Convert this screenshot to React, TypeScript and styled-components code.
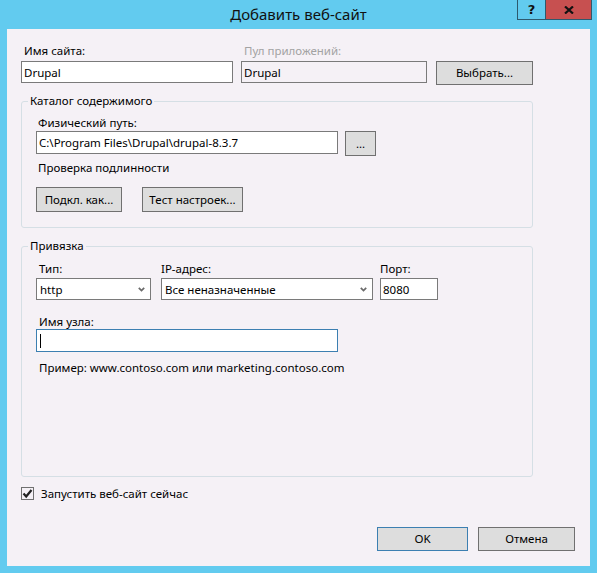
import React from "react";
import styled, { createGlobalStyle } from "styled-components";

const Global = createGlobalStyle`
  html, body { margin: 0; padding: 0; }
  body { font-family: "Noto Sans", "Open Sans", sans-serif; font-size: 11.5px; color: #000; }
  * { box-sizing: border-box; }
`;

const Window = styled.div`
  width: 597px;
  height: 573px;
  background: #62cbef;
  display: flex;
  flex-direction: column;
`;

const TitleBar = styled.div`
  height: 29px;
  flex: none;
  display: grid;
  grid-template-columns: 1fr auto 1fr;
  align-items: start;
`;

const Title = styled.div`
  grid-column: 2;
  font-size: 15px;
  line-height: 28px;
  color: #111;
`;

const Caption = styled.div`
  grid-column: 3;
  justify-self: end;
  display: flex;
  margin-right: 5px;
`;

const CapButton = styled.div<{ $w: number; $bg: string }>`
  width: ${(p) => p.$w}px;
  height: 20px;
  background: ${(p) => p.$bg};
  border: 1px solid #2d5a6e;
  border-top: none;
  display: flex;
  align-items: center;
  justify-content: center;
  font-weight: bold;
  font-size: 13px;
  font-family: "DejaVu Sans", sans-serif;
  color: #111;
  & + & { border-left: none; }
`;

const Client = styled.div`
  flex: 1;
  margin: 0 7px 7px;
  background: #f5f1f6;
  padding: 14px 15px 15px 14px;
  display: flex;
  flex-direction: column;
`;

const TopGrid = styled.div`
  display: grid;
  grid-template-columns: 212px 186px 98px;
  column-gap: 8px;
  row-gap: 3px;
  align-items: start;
`;

const Label = styled.div<{ $indent?: number; $disabled?: boolean; $mt?: number }>`
  line-height: 15px;
  height: 15px;
  white-space: nowrap;
  padding-left: ${(p) => p.$indent ?? 3}px;
  margin-top: ${(p) => p.$mt ?? 0}px;
  color: ${(p) => (p.$disabled ? "#a3a3a3" : "#000")};
`;

const TextBox = styled.input<{ $w?: number; $h?: number; $ro?: boolean }>`
  width: ${(p) => (p.$w ? `${p.$w}px` : "100%")};
  height: ${(p) => p.$h ?? 22}px;
  margin: 0;
  padding: 0 2px;
  border: 1px solid #7a7a7a;
  background: ${(p) => (p.$ro ? "#f5f1f6" : "#fff")};
  font: inherit;
  color: #000;
  outline: none;
`;

const FocusBox = styled.div<{ $w: number }>`
  width: ${(p) => p.$w}px;
  height: 23px;
  border: 1px solid #3c7fb1;
  background: #fff;
  display: flex;
  align-items: center;
  padding-left: 3px;
`;

const Caret = styled.span`
  width: 1px;
  height: 14px;
  background: #000;
`;

const Button = styled.button<{ $w: number; $h?: number; $default?: boolean; $ml?: number }>`
  width: ${(p) => p.$w}px;
  height: ${(p) => p.$h ?? 25}px;
  margin: 0 0 0 ${(p) => p.$ml ?? 0}px;
  padding: 0;
  border: 1px solid ${(p) => (p.$default ? "#3c7fb1" : "#707070")};
  background: #dddddd;
  font: inherit;
  color: #000;
  line-height: 1;
`;

const Group = styled.fieldset<{ $mt: number }>`
  width: 512px;
  margin: ${(p) => p.$mt}px 0 0;
  padding: 0;
  border: 1px solid #d5dfe5;
  border-radius: 3px;
  min-width: 0;
`;

const Legend = styled.legend`
  margin-left: 6px;
  padding: 0 2px;
  line-height: 16px;
  height: 16px;
`;

const GroupBody = styled.div<{ $pt: number; $pb: number }>`
  padding: ${(p) => p.$pt}px 0 ${(p) => p.$pb}px 14px;
  display: flex;
  flex-direction: column;
  align-items: flex-start;
`;

const Row = styled.div<{ $gap: number; $mt?: number }>`
  display: flex;
  align-items: flex-start;
  gap: ${(p) => p.$gap}px;
  margin-top: ${(p) => p.$mt ?? 0}px;
`;

const Field = styled.div<{ $w: number; $mr?: number }>`
  width: ${(p) => p.$w}px;
  margin-right: ${(p) => p.$mr ?? 0}px;
  display: flex;
  flex-direction: column;
  gap: 2px;
`;

const Select = styled.div`
  height: 22px;
  border: 1px solid #7a7a7a;
  background: #fff;
  display: flex;
  align-items: center;
  justify-content: space-between;
  padding: 0 5px 0 3px;
`;

const CheckRow = styled.label`
  display: flex;
  align-items: center;
  gap: 7px;
  margin-top: 9px;
  line-height: 15px;
`;

const CheckBox = styled.span`
  width: 13px;
  height: 13px;
  border: 1px solid #707070;
  background: #f5f1f6;
  display: flex;
  align-items: center;
  justify-content: center;
`;

const Footer = styled.div`
  margin-top: auto;
  display: flex;
  justify-content: flex-end;
  gap: 10px;
`;

const Chevron = () => (
  <svg width="7" height="5" viewBox="0 0 7 5">
    <path d="M0.8 0.8 L3.5 3.6 L6.2 0.8" fill="none" stroke="#6a6a6a" strokeWidth="1.7" />
  </svg>
);

export default function App() {
  return (
    <>
      <Global />
      <Window>
        <TitleBar>
          <Title>Добавить веб-сайт</Title>
          <Caption>
            <CapButton $w={29} $bg="#62cbef">?</CapButton>
            <CapButton $w={46} $bg="#c75050">
              <svg width="10" height="8" viewBox="0 0 10 8">
                <path d="M1 0.5 L9 7.5 M9 0.5 L1 7.5" stroke="#111" strokeWidth="2.2" />
              </svg>
            </CapButton>
          </Caption>
        </TitleBar>
        <Client>
          <TopGrid>
            <Label>Имя сайта:</Label>
            <Label $disabled>Пул приложений:</Label>
            <span />
            <TextBox readOnly value="Drupal" />
            <TextBox readOnly $ro value="Drupal" />
            <Button $w={97} $h={24} $ml={1}>Выбрать...</Button>
          </TopGrid>

          <Group $mt={8}>
            <Legend>Каталог содержимого</Legend>
            <GroupBody $pt={6} $pb={15}>
              <Label $indent={2}>Физический путь:</Label>
              <Row $gap={7} $mt={1}>
                <TextBox readOnly $w={302} $h={23} value="C:\Program Files\Drupal\drupal-8.3.7" />
                <Button $w={31}>...</Button>
              </Row>
              <Label $indent={2} $mt={4}>Проверка подлинности</Label>
              <Row $gap={20} $mt={12}>
                <Button $w={86}>Подкл. как...</Button>
                <Button $w={101}>Тест настроек...</Button>
              </Row>
            </GroupBody>
          </Group>

          <Group $mt={10}>
            <Legend>Привязка</Legend>
            <GroupBody $pt={7} $pb={101}>
              <Row $gap={0}>
                <Field $w={115} $mr={10}>
                  <Label>Тип:</Label>
                  <Select>
                    <span>http</span>
                    <Chevron />
                  </Select>
                </Field>
                <Field $w={212} $mr={7}>
                  <Label $indent={0}>IP-адрес:</Label>
                  <Select>
                    <span>Все неназначенные</span>
                    <Chevron />
                  </Select>
                </Field>
                <Field $w={58}>
                  <Label $indent={0}>Порт:</Label>
                  <TextBox readOnly value="8080" />
                </Field>
              </Row>
              <Label $mt={14}>Имя узла:</Label>
              <FocusBox $w={302}>
                <Caret />
              </FocusBox>
              <Label $mt={8}>Пример: www.contoso.com или marketing.contoso.com</Label>
            </GroupBody>
          </Group>

          <CheckRow>
            <CheckBox>
              <svg width="11" height="11" viewBox="0 0 11 11">
                <path d="M1.5 5.5 L4.2 8.5 L9.5 2" fill="none" stroke="#222" strokeWidth="2.2" />
              </svg>
            </CheckBox>
            <span>Запустить веб-сайт сейчас</span>
          </CheckRow>

          <Footer>
            <Button $w={91} $h={24} $default>OK</Button>
            <Button $w={97} $h={24}>Отмена</Button>
          </Footer>
        </Client>
      </Window>
    </>
  );
}
